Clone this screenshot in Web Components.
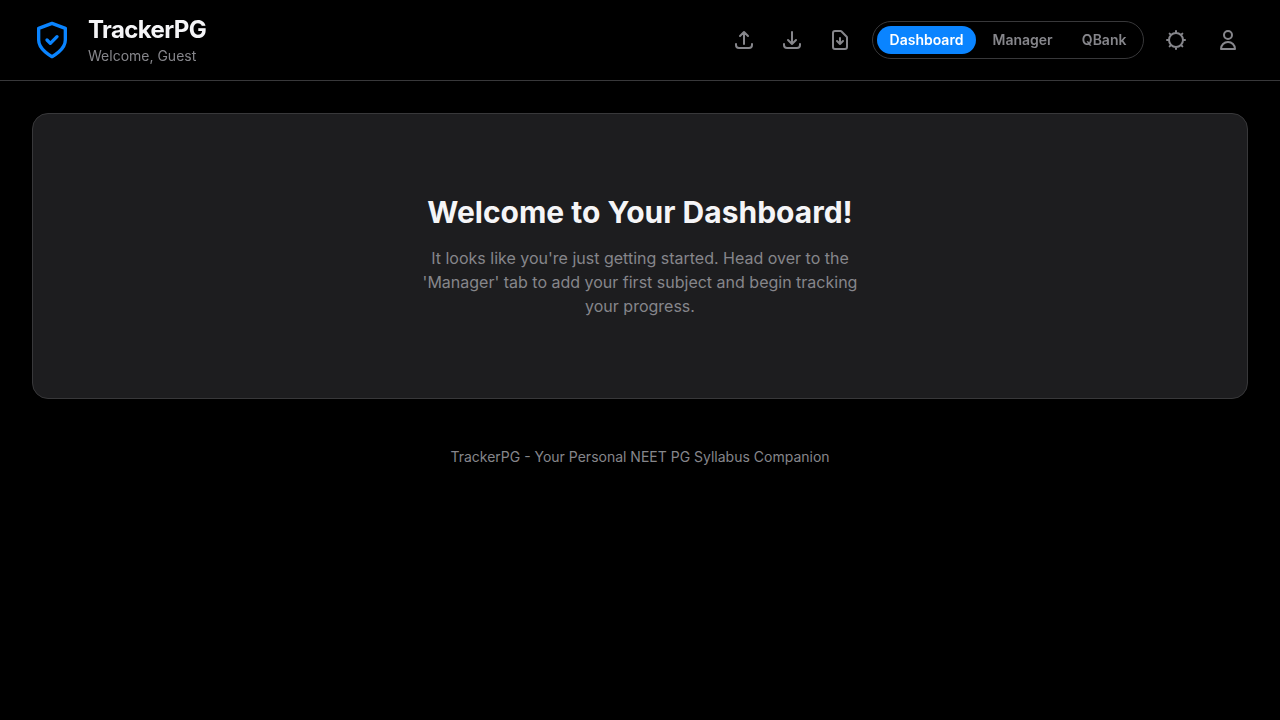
<!DOCTYPE html>
<html lang="en">
<head>
<meta charset="utf-8">
<meta name="viewport" content="width=device-width, initial-scale=1">
<title>TrackerPG</title>
<style>
  :root {
    --bg: #000000;
    --surface: #1d1d1f;
    --line: #38383a;
    --text: #f5f5f7;
    --muted: #86868b;
    --accent: #0a84ff;
  }
  body {
    margin: 0;
    background: var(--bg);
    color: var(--text);
    font-family: Inter, "Liberation Sans", sans-serif;
  }
</style>
</head>
<body>
<tracker-app></tracker-app>

<script>
const define = (name, markup) => {
  const template = document.createElement('template');
  template.innerHTML = markup;
  customElements.define(name, class extends HTMLElement {
    constructor() {
      super();
      this.attachShadow({ mode: 'open' }).append(template.content.cloneNode(true));
    }
  });
};

const ICONS = {
  shield: 'M12 22s8-4 8-10V5l-8-3-8 3v7c0 6 8 10 8 10z M9 12l2 2 4-4',
  upload: 'M4 16v1a3 3 0 003 3h10a3 3 0 003-3v-1m-4-8l-4-4m0 0L8 8m4-4v12',
  download: 'M4 16v1a3 3 0 003 3h10a3 3 0 003-3v-1m-4-4l-4 4m0 0l-4-4m4 4V4',
  file: 'M12 10v6m0 0l-3-3m3 3l3-3m2 8H7a2 2 0 01-2-2V5a2 2 0 012-2h5.586a1 1 0 01.707.293l5.414 5.414a1 1 0 01.293.707V19a2 2 0 01-2 2z',
  sun: 'M12 3v1m0 16v1m9-9h-1M4 12H3m15.364 6.364l-.707-.707M6.343 6.343l-.707-.707m12.728 0l-.707.707M6.343 17.657l-.707.707M12 5a7 7 0 100 14 7 7 0 000-14z',
  user: 'M16 7a4 4 0 11-8 0 4 4 0 018 0zM12 14a7 7 0 00-7 7h14a7 7 0 00-7-7z'
};

customElements.define('ui-icon', class extends HTMLElement {
  constructor() {
    super();
    this.attachShadow({ mode: 'open' });
  }
  connectedCallback() {
    this.shadowRoot.innerHTML = `
      <style>
        :host { display: block; width: 24px; height: 24px; }
        svg { display: block; width: 100%; height: 100%; }
      </style>
      <svg viewBox="0 0 24 24" fill="none" stroke="currentColor" stroke-width="2"
           stroke-linecap="round" stroke-linejoin="round" aria-hidden="true">
        <path d="${ICONS[this.getAttribute('name')]}"/>
      </svg>`;
  }
});

customElements.define('icon-button', class extends HTMLElement {
  constructor() {
    super();
    this.attachShadow({ mode: 'open' });
  }
  connectedCallback() {
    this.shadowRoot.innerHTML = `
      <style>
        :host { display: block; }
        button {
          display: block; padding: 8px; border: 0; border-radius: 20px;
          background: none; color: var(--muted); cursor: pointer;
        }
        button:hover { color: var(--text); }
      </style>
      <button type="button" aria-label="${this.getAttribute('label')}">
        <ui-icon name="${this.getAttribute('icon')}"></ui-icon>
      </button>`;
  }
});

define('brand-mark', `
  <style>
    :host { display: flex; align-items: center; gap: 16px; }
    ui-icon { width: 40px; height: 40px; color: var(--accent); }
    h1 { margin: 0; font-size: 24px; line-height: 32px; font-weight: 700; letter-spacing: -0.025em; }
    p { margin: 0; font-size: 14px; line-height: 20px; color: var(--muted); }
  </style>
  <ui-icon name="shield"></ui-icon>
  <div>
    <h1><slot></slot></h1>
    <p><slot name="greeting"></slot></p>
  </div>`);

define('view-tabs', `
  <style>
    :host { display: block; }
    nav {
      display: flex; gap: 4px; box-sizing: border-box; min-width: 272px;
      padding: 4px; border: 1px solid var(--line); border-radius: 20px;
    }
    button {
      flex: 1 0 auto; padding: 4px 12px; border: 0; border-radius: 14px;
      background: none; color: var(--muted);
      font: 600 14px/20px Inter, "Liberation Sans", sans-serif; cursor: pointer;
    }
    button[aria-current] { background: var(--accent); color: #ffffff; }
  </style>
  <nav aria-label="Views">
    <button type="button" aria-current="page">Dashboard</button>
    <button type="button">Manager</button>
    <button type="button">QBank</button>
  </nav>`);

define('app-header', `
  <style>
    :host { display: block; position: sticky; top: 0; z-index: 1; }
    header {
      display: flex; align-items: center; justify-content: space-between;
      min-height: 80px; padding: 0 32px; border-bottom: 1px solid var(--line);
      background: rgba(0, 0, 0, 0.8); backdrop-filter: blur(16px);
    }
    .tools, .files { display: flex; align-items: center; }
    .tools { gap: 12px; }
    .files { gap: 8px; }
  </style>
  <header>
    <brand-mark>TrackerPG<span slot="greeting">Welcome, Guest</span></brand-mark>
    <div class="tools">
      <div class="files">
        <icon-button icon="upload" label="Import data"></icon-button>
        <icon-button icon="download" label="Export data"></icon-button>
        <icon-button icon="file" label="Download report"></icon-button>
      </div>
      <view-tabs></view-tabs>
      <icon-button icon="sun" label="Toggle theme"></icon-button>
      <icon-button icon="user" label="Account"></icon-button>
    </div>
  </header>`);

define('empty-state', `
  <style>
    :host {
      display: block; padding: 80px 32px; border: 1px solid var(--line);
      border-radius: 16px; background: var(--surface); text-align: center;
    }
    h2 { margin: 0 0 16px; font-size: 30px; line-height: 36px; font-weight: 700; }
    p { max-width: 448px; margin: 0 auto; font-size: 16px; line-height: 24px; color: var(--muted); }
  </style>
  <h2><slot name="title"></slot></h2>
  <p><slot></slot></p>`);

define('app-footer', `
  <style>
    :host { display: block; }
    footer { padding: 16px 32px; text-align: center; font-size: 14px; line-height: 20px; color: var(--muted); }
  </style>
  <footer><slot></slot></footer>`);

define('tracker-app', `
  <style>
    :host { display: block; }
    main { padding: 32px; }
  </style>
  <app-header></app-header>
  <main>
    <empty-state>
      <span slot="title">Welcome to Your Dashboard!</span>
      It looks like you're just getting started. Head over to the 'Manager' tab to add your first subject and begin tracking your progress.
    </empty-state>
  </main>
  <app-footer>TrackerPG - Your Personal NEET PG Syllabus Companion</app-footer>`);
</script>
</body>
</html>
